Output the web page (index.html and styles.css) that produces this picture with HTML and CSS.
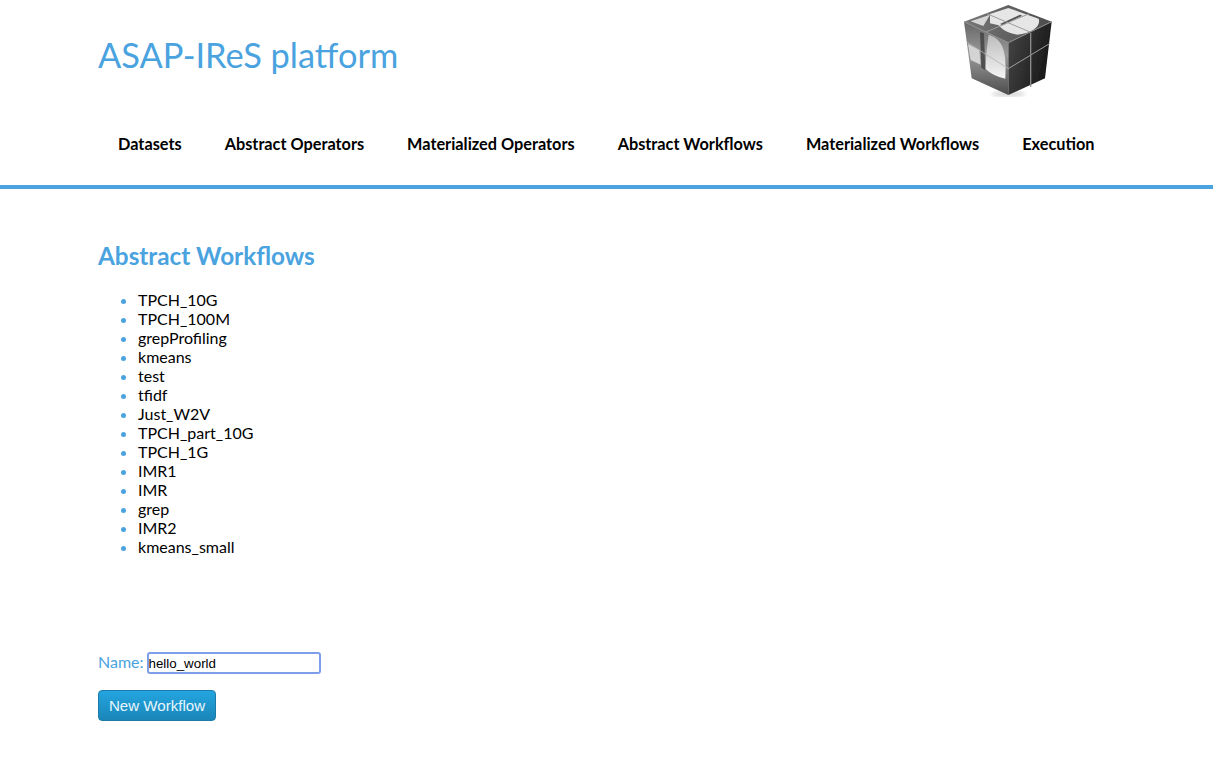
FILE: index.html
```html
<!DOCTYPE html>
<html lang="en">
<head>
    <meta charset="UTF-8">
    <meta name="viewport" content="width=device-width, initial-scale=1.0">
    <title>ASAP-IReS platform</title>
    <link rel="stylesheet" href="styles.css">
</head>
<body>
    <div class="header">
        <div class="top">
            <h1 class="title">ASAP-IReS platform</h1>
            <svg class="logo" width="130" height="105" viewBox="0 0 390 315">
                <defs>
                    <linearGradient id="leftFace" x1="0" y1="0" x2="0" y2="1">
                        <stop offset="0" stop-color="#666"/>
                        <stop offset="0.45" stop-color="#9a9a9a"/>
                        <stop offset="1" stop-color="#4c4c4c"/>
                    </linearGradient>
                    <linearGradient id="rightFace" x1="0" y1="0" x2="1" y2="0.4">
                        <stop offset="0" stop-color="#474747"/>
                        <stop offset="1" stop-color="#191919"/>
                    </linearGradient>
                    <linearGradient id="topFace" x1="0" y1="0" x2="1" y2="0">
                        <stop offset="0" stop-color="#777"/>
                        <stop offset="1" stop-color="#4c4c4c"/>
                    </linearGradient>
                    <linearGradient id="glow" x1="0" y1="0" x2="0" y2="1">
                        <stop offset="0" stop-color="#bdbdbd"/>
                        <stop offset="1" stop-color="#f4f4f4"/>
                    </linearGradient>
                    <filter id="soft"><feGaussianBlur stdDeviation="1.6"/></filter>
                    <filter id="softer"><feGaussianBlur stdDeviation="7"/></filter>
                </defs>
                <ellipse cx="205" cy="282" rx="50" ry="7" fill="#cfcfcf" filter="url(#softer)"/>
                <g filter="url(#soft)">
                    <path d="M72 65 L205 15 L335 65 L205 128 Z" fill="url(#topFace)"/>
                    <path d="M72 65 L205 128 L205 285 L95 235 Z" fill="url(#leftFace)"/>
                    <path d="M335 65 L205 128 L205 285 L315 235 Z" fill="url(#rightFace)"/>
                    <path d="M92 64 L150 44 L130 78 Z" fill="#d6d6d6"/>
                    <path d="M150 42 L205 24 L296 56 C304 78 276 100 232 104 C205 100 188 90 176 76 L150 70 Z" fill="#e6e6e6"/>
                    <path d="M180 72 L240 44 L247 47 L188 76 Z" fill="#555"/>
                    <path d="M138 40 L270 96 M138 96 L270 40" fill="none" stroke="#9c9c9c" stroke-width="3"/>
                    <path d="M84 132 L118 150 L122 194 L92 180 Z" fill="#d4d4d4"/>
                    <path d="M146 104 C188 118 200 150 196 236 C170 230 150 220 136 206 L140 150 Z" fill="url(#glow)"/>
                    <path d="M120 96 L132 100 L136 210 L124 204 Z" fill="#444" opacity="0.85"/>
                    <path d="M80 126 L205 206 L330 130" fill="none" stroke="#b4b4b4" stroke-width="2.5"/>
                    <path d="M272 98 L272 260" fill="none" stroke="#8c8c8c" stroke-width="4"/>
                    <path d="M72 65 L205 128 L335 65" fill="none" stroke="#8e8e8e" stroke-width="3"/>
                </g>
            </svg>
        </div>
        <ul class="nav">
            <li>Datasets</li>
            <li>Abstract Operators</li>
            <li>Materialized Operators</li>
            <li>Abstract Workflows</li>
            <li>Materialized Workflows</li>
            <li>Execution</li>
        </ul>
    </div>
    <div class="content">
        <h2 class="heading">Abstract Workflows</h2>
        <ul class="workflows">
            <li>TPCH_10G</li>
            <li>TPCH_100M</li>
            <li>grepProfiling</li>
            <li>kmeans</li>
            <li>test</li>
            <li>tfidf</li>
            <li>Just_W2V</li>
            <li>TPCH_part_10G</li>
            <li>TPCH_1G</li>
            <li>IMR1</li>
            <li>IMR</li>
            <li>grep</li>
            <li>IMR2</li>
            <li>kmeans_small</li>
        </ul>
        <form class="newForm">
            <div class="nameRow">
                <label class="nameLabel" for="name">Name:</label>
                <input class="nameInput" id="name" type="text" value="hello_world">
            </div>
            <button class="newBtn" type="button">New Workflow</button>
        </form>
    </div>
</body>
</html>
```

FILE: styles.css
```css
body {
    margin: 0;
    font-family: "Lato", sans-serif;
    font-size: 16px;
    color: #000;
    background: #fff;
}
.header {
    border-bottom: 4px solid #4aa3df;
    height: 185px;
}
.top {
    display: flex;
    justify-content: space-between;
    height: 105px;
    padding: 0 143px 0 98px;
}
.title {
    margin: 0;
    padding-top: 34px;
    font-size: 34.4px;
    line-height: 42px;
    font-weight: 400;
    color: #4aa3df;
}
.nav {
    display: flex;
    gap: 43px;
    margin: 0;
    padding: 29px 0 0 118px;
    list-style: none;
    font-size: 16.3px;
    font-weight: 700;
    line-height: 19px;
}
.content {
    padding: 52px 98px 0;
}
.heading {
    margin: 0;
    font-size: 24.3px;
    line-height: 30px;
    font-weight: 700;
    color: #4aa3df;
}
.workflows {
    margin: 19px 0 0;
    padding-left: 40px;
    line-height: 19px;
}
.workflows li::marker {
    color: #4aa3df;
}
.newForm {
    margin-top: 96px;
}
.nameRow {
    display: flex;
    align-items: flex-start;
    gap: 3px;
}
.nameLabel {
    line-height: 19px;
    color: #4aa3df;
}
.nameInput {
    box-sizing: border-box;
    width: 174px;
    height: 22px;
    padding: 1px 0;
    border: 2px solid #7d9fea;
    border-radius: 3px;
    font-family: "Liberation Sans", sans-serif;
    font-size: 13.33px;
    color: #000;
    outline: none;
}
.newBtn {
    display: block;
    box-sizing: border-box;
    width: 118px;
    height: 31px;
    margin-top: 16px;
    padding: 0;
    border: 1px solid #1b7ba8;
    border-radius: 4px;
    background: linear-gradient(#24a5e0, #1a86b8);
    font-family: "Liberation Sans", sans-serif;
    font-size: 15.1px;
    color: #e8f6fd;
}
```
